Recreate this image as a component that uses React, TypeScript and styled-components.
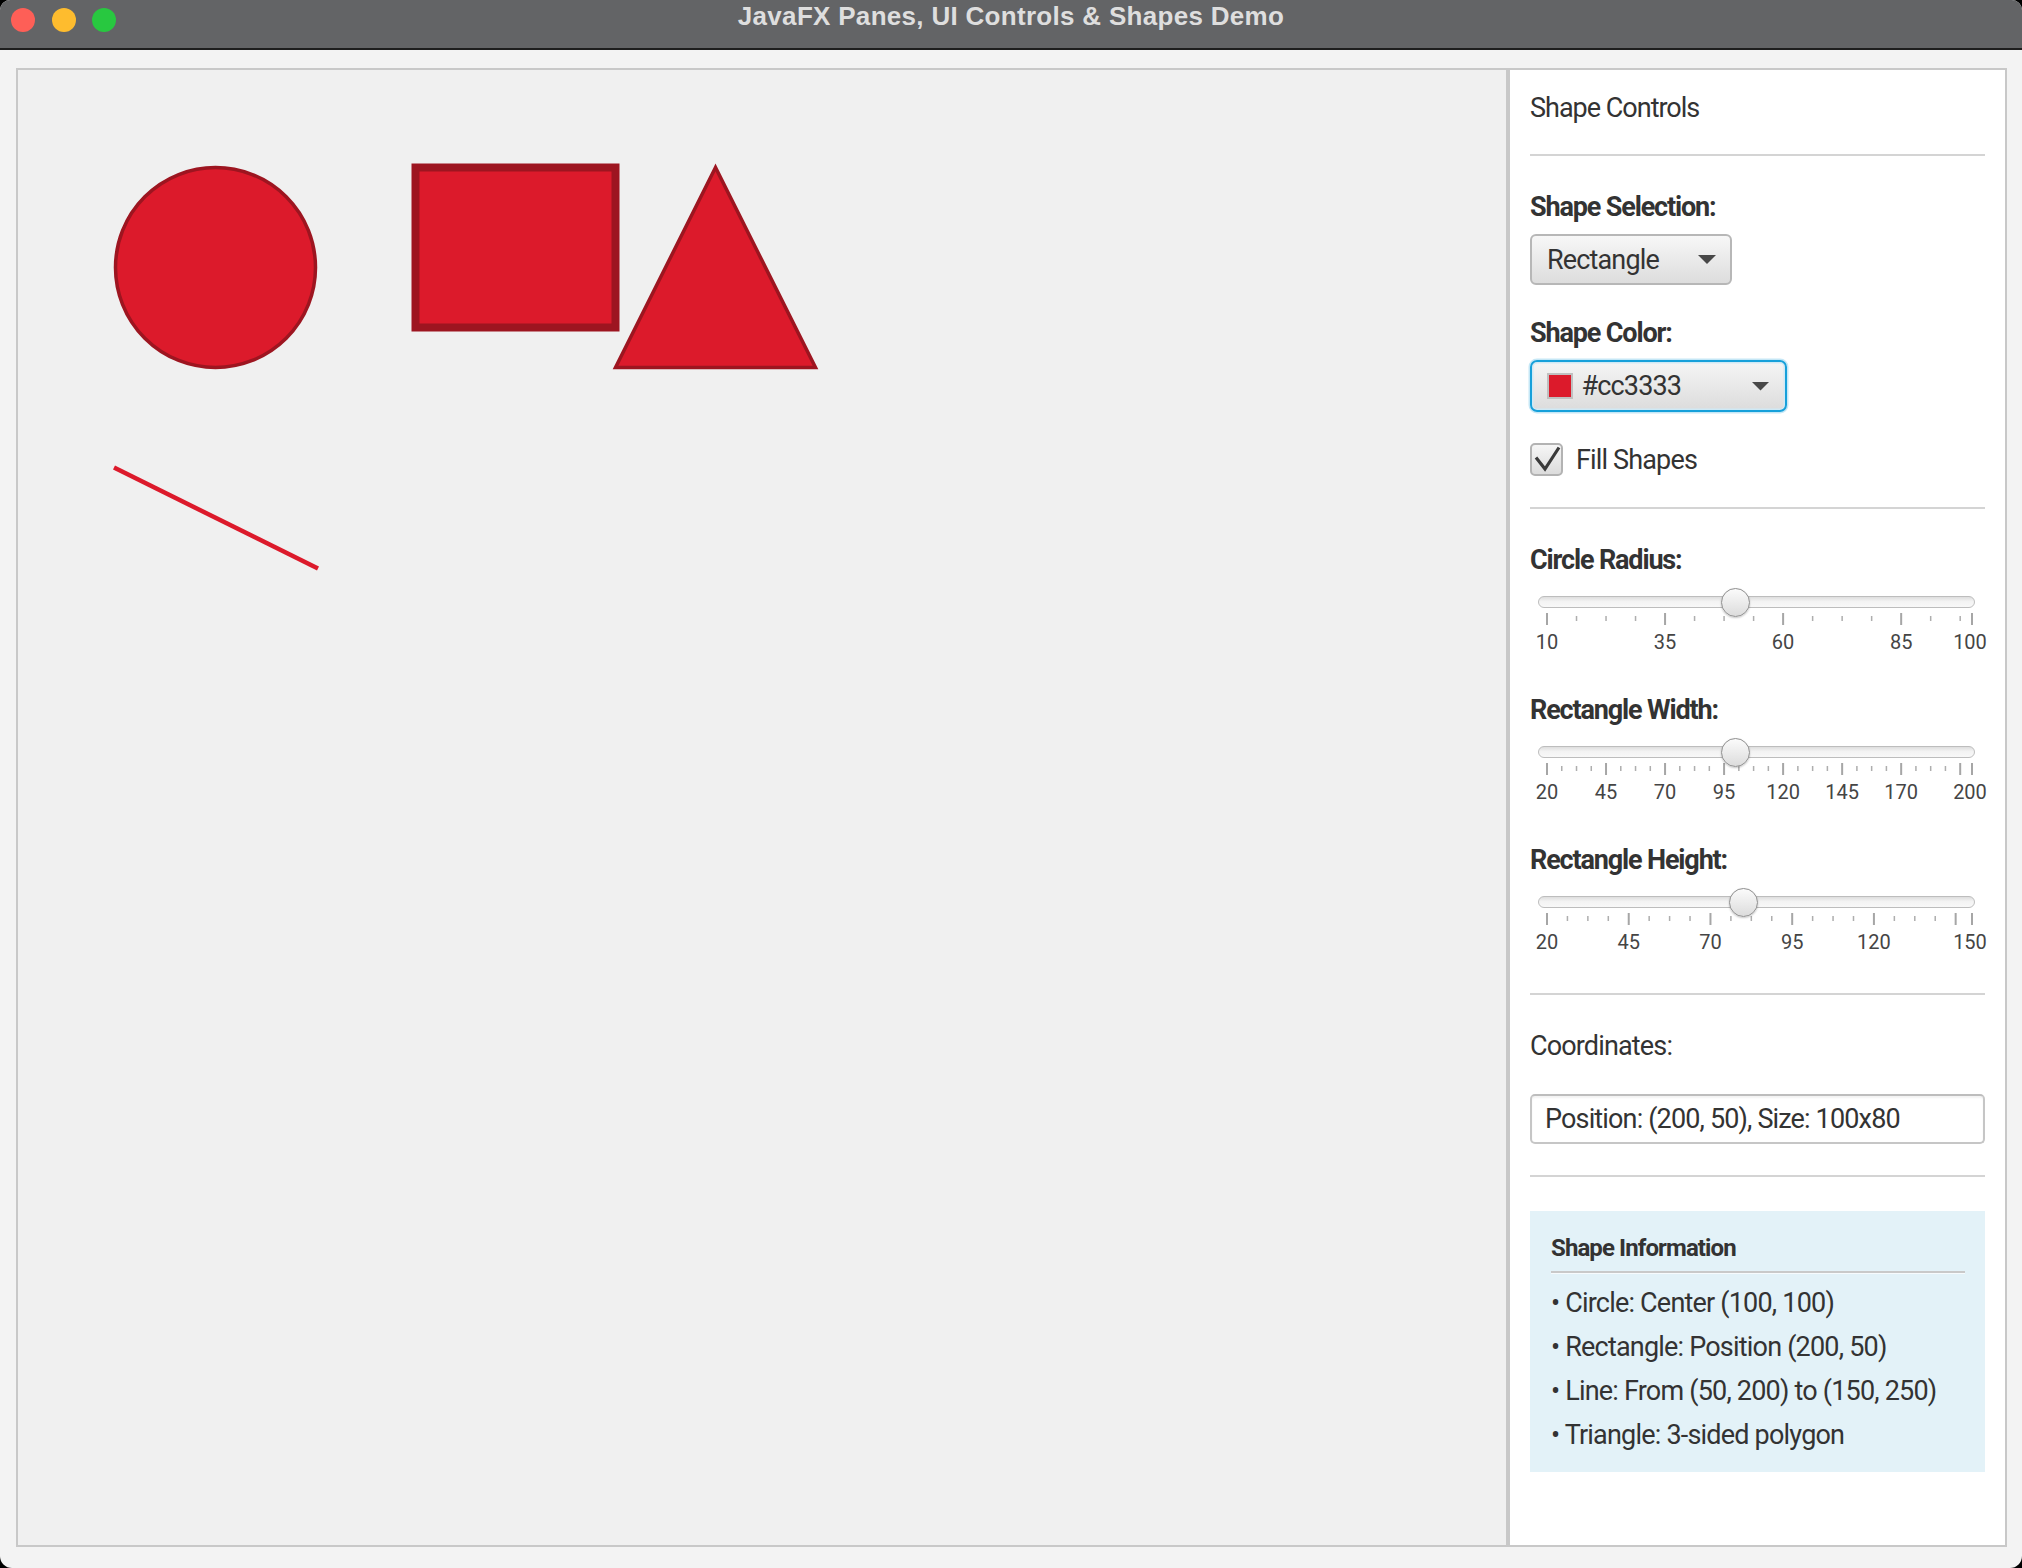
import React from 'react';
import styled, { createGlobalStyle } from 'styled-components';

const GlobalStyle = createGlobalStyle`
  html, body { margin: 0; padding: 0; background: #000; }
  body { width: 2022px; height: 1568px; overflow: hidden; font-family: Roboto, "Liberation Sans", sans-serif; }
  * { box-sizing: border-box; }
`;

const Window = styled.div`
  width: 2022px;
  height: 1568px;
  display: flex;
  flex-direction: column;
  background: #f3f3f3;
  border-radius: 10px 10px 12px 12px;
  overflow: hidden;
`;

const TitleBar = styled.header`
  height: 50px;
  flex: none;
  background: #636466;
  border-bottom: 2px solid #1e1e1e;
  display: grid;
  grid-template-columns: 1fr auto 1fr;
  align-items: start;
`;

const Lights = styled.div`
  display: flex;
  gap: 16.5px;
  padding: 8px 0 0 11px;
`;

const Light = styled.span<{ $c: string }>`
  width: 24px;
  height: 24px;
  border-radius: 50%;
  background: ${(p) => p.$c};
`;

const Title = styled.h1`
  margin: 0;
  padding-top: 1px;
  font: bold 26px/30px "Liberation Sans", Arial, sans-serif;
  letter-spacing: 0.3px;
  color: #dedede;
  white-space: nowrap;
`;

const Body = styled.main`
  flex: 1;
  min-height: 0;
  display: flex;
  padding: 18px 15px 21px 16px;
`;

const Canvas = styled.section`
  flex: 1;
  min-width: 0;
  border: 2px solid #c8c8c8;
  background: #f0f0f0;
`;

const CanvasSvg = styled.svg`
  display: block;
  width: 100%;
  height: 100%;
`;

const Panel = styled.aside`
  width: 499px;
  flex: none;
  background: #fff;
  border: 2px solid #c8c8c8;
  padding: 0 20px;
  display: flex;
  flex-direction: column;
  color: #333;
`;

const textBase = `
  font-family: Roboto, "Liberation Sans", sans-serif;
  font-size: 27px;
  line-height: 32px;
  letter-spacing: -0.85px;
  color: #333;
  white-space: nowrap;
`;

const PanelTitle = styled.h2`
  ${textBase}
  margin: 22px 0 0;
  font-weight: 400;
  letter-spacing: -1px;
`;

const Separator = styled.hr<{ $mt: number }>`
  margin: ${(p) => p.$mt}px 0 0;
  border: none;
  height: 2px;
  flex: none;
  background: #d4d4d4;
`;

const FieldLabel = styled.div<{ $mt: number }>`
  ${textBase}
  margin-top: ${(p) => p.$mt}px;
  font-weight: 700;
  letter-spacing: -1.15px;
`;

const PlainLabel = styled.div<{ $mt: number }>`
  ${textBase}
  margin-top: ${(p) => p.$mt}px;
  font-weight: 400;
`;

const ComboBox = styled.div`
  ${textBase}
  margin-top: 11px;
  width: 202px;
  height: 51px;
  flex: none;
  border: 2px solid #b7b7b7;
  border-radius: 6px;
  background: linear-gradient(to bottom, #f7f7f7, #dddddd);
  display: flex;
  align-items: center;
  justify-content: space-between;
  padding: 0 14px 0 15px;
`;

const Arrow = styled.span`
  width: 18px;
  height: 9px;
  background: #484848;
  clip-path: polygon(0 0, 100% 0, 50% 100%);
  flex: none;
`;

const ColorPicker = styled.div`
  ${textBase}
  margin-top: 11px;
  width: 257px;
  height: 52px;
  flex: none;
  border: 2.5px solid #16a0da;
  border-radius: 7px;
  box-shadow: 0 0 0 1.5px rgba(22, 160, 218, 0.25), inset 0 0 0 1.5px #cfe9f5;
  background: linear-gradient(to bottom, #f5f5f5, #dcdcdc);
  display: flex;
  align-items: center;
  padding: 0 15.5px 0 14.5px;
`;

const Swatch = styled.span<{ $c: string }>`
  width: 26px;
  height: 26px;
  flex: none;
  border: 2px solid #c0c0c0;
  background: ${(p) => p.$c};
`;

const PickerText = styled.span`
  margin-left: 9px;
  flex: 1;
`;

const CheckRow = styled.label`
  ${textBase}
  margin-top: 31px;
  height: 33px;
  display: flex;
  align-items: center;
  gap: 13px;
`;

const CheckBox = styled.span`
  width: 33px;
  height: 33px;
  flex: none;
  border: 2px solid #b3b3b3;
  border-radius: 5px;
  background: linear-gradient(to bottom, #f6f6f6, #dcdcdc);
  display: flex;
`;

const SliderBox = styled.div`
  margin-top: 11px;
  display: flex;
  flex-direction: column;
`;

const TrackRow = styled.div`
  position: relative;
  height: 30px;
  display: flex;
  align-items: center;
  padding: 0 10px 0 8px;
`;

const Track = styled.div`
  flex: 1;
  height: 12px;
  border-radius: 6px;
  border: 1.5px solid #bdbdbd;
  background: linear-gradient(to bottom, #dedede, #f3f3f3 45%, #f8f8f8);
`;

const Thumb = styled.span`
  position: absolute;
  top: 0.5px;
  width: 29px;
  height: 29px;
  border-radius: 50%;
  border: 1.5px solid #8e8e8e;
  background: linear-gradient(to bottom, #fbfbfb, #dcdcdc);
  box-shadow: 0 1px 2px rgba(0, 0, 0, 0.22);
  z-index: 2;
`;

const TickSvg = styled.svg`
  display: block;
  margin-top: -4px;
  flex: none;
`;

const TickLabels = styled.div`
  position: relative;
  margin-top: 5px;
  height: 24px;
`;

const TickLabel = styled.span`
  position: absolute;
  top: 0;
  transform: translateX(-50%);
  font-family: Roboto, "Liberation Sans", sans-serif;
  font-size: 20px;
  line-height: 24px;
  color: #454545;
  white-space: nowrap;
`;

const TextField = styled.div`
  ${textBase}
  margin-top: 32px;
  height: 50px;
  flex: none;
  border: 2px solid #c6c6c6;
  border-top-color: #bdbdbd;
  border-radius: 5px;
  background: #fff;
  box-shadow: inset 0 2px 2px rgba(0, 0, 0, 0.05);
  display: flex;
  align-items: center;
  padding: 0 13px;
`;

const InfoBox = styled.div`
  margin-top: 34px;
  background: #e3f2f8;
  padding: 23px 20px 21px 21px;
  display: flex;
  flex-direction: column;
`;

const InfoTitle = styled.h3`
  margin: 0;
  font-family: Roboto, "Liberation Sans", sans-serif;
  font-size: 24px;
  line-height: 28px;
  font-weight: 700;
  letter-spacing: -0.9px;
  color: #333;
`;

const InfoRule = styled.div`
  margin-top: 9px;
  border-top: 2px solid #c9c9c9;
  border-bottom: 1.5px solid #f7fbfd;
`;

const InfoList = styled.ul`
  margin: 13px 0 0;
  padding: 0;
  list-style: none;
  display: flex;
  flex-direction: column;
  gap: 12px;
`;

const InfoItem = styled.li`
  ${textBase}
  letter-spacing: -0.8px;
`;

const TICK_START = 17;
const TICK_SPAN = 425;
const CONTENT_W = 455;

type SliderProps = { min: number; max: number; value: number; major: number };

function Slider({ min, max, value, major }: SliderProps) {
  const pos = (v: number) => TICK_START + ((v - min) / (max - min)) * TICK_SPAN;
  const majors: number[] = [];
  const minors: number[] = [];
  for (let v = min; v < max; v += major) {
    majors.push(v);
    for (let k = 1; k < 4; k++) {
      const m = v + (k * major) / 4;
      if (m < max) minors.push(m);
    }
  }
  majors.push(max);
  const labels = majors.filter((v) => v === max || pos(max) - pos(v) >= 40);
  return (
    <SliderBox>
      <TrackRow>
        <Track />
        <Thumb style={{ left: pos(value) - 14.5 }} />
      </TrackRow>
      <TickSvg width={CONTENT_W} height={12} viewBox={`0 0 ${CONTENT_W} 12`}>
        {majors.map((v) => (
          <rect key={`M${v}`} x={pos(v) - 1} y={0} width={2} height={12} fill="#a6a6a6" />
        ))}
        {minors.map((v) => (
          <rect key={`m${v}`} x={pos(v) - 0.75} y={3} width={1.5} height={5} fill="#aeaeae" />
        ))}
      </TickSvg>
      <TickLabels>
        {labels.map((v) => (
          <TickLabel key={v} style={{ left: pos(v) - (v === max ? 2 : 0) }}>
            {v}
          </TickLabel>
        ))}
      </TickLabels>
    </SliderBox>
  );
}

const FILL = '#dc1a2b';
const STROKE = '#9d1520';

function ShapeCanvas() {
  return (
    <Canvas>
      <CanvasSvg>
        <circle cx={197.5} cy={197.5} r={100} fill={FILL} stroke={STROKE} strokeWidth={3.5} />
        <rect x={397.5} y={97.5} width={200} height={160} fill={FILL} stroke={STROKE} strokeWidth={8} />
        <polygon
          points="697.5,97.5 597.5,297.5 797.5,297.5"
          fill={FILL}
          stroke={STROKE}
          strokeWidth={3.5}
          strokeLinejoin="miter"
        />
        <line x1={96} y1={397.5} x2={300} y2={498.5} stroke={FILL} strokeWidth={4.5} />
      </CanvasSvg>
    </Canvas>
  );
}

export default function App() {
  return (
    <>
      <GlobalStyle />
      <Window>
        <TitleBar>
          <Lights>
            <Light $c="#fe5f57" />
            <Light $c="#febc2e" />
            <Light $c="#28c840" />
          </Lights>
          <Title>JavaFX Panes, UI Controls &amp; Shapes Demo</Title>
          <div />
        </TitleBar>
        <Body>
          <ShapeCanvas />
          <Panel>
            <PanelTitle>Shape Controls</PanelTitle>
            <Separator $mt={30} />
            <FieldLabel $mt={35}>Shape Selection:</FieldLabel>
            <ComboBox>
              <span>Rectangle</span>
              <Arrow />
            </ComboBox>
            <FieldLabel $mt={32}>Shape Color:</FieldLabel>
            <ColorPicker>
              <Swatch $c={FILL} />
              <PickerText>#cc3333</PickerText>
              <Arrow />
            </ColorPicker>
            <CheckRow>
              <CheckBox>
                <svg width="29" height="29" viewBox="0 0 29 29">
                  <path d="M4 12.5 L13 24 L27 2.5" fill="none" stroke="#3a3a3a" strokeWidth={3.2} />
                </svg>
              </CheckBox>
              <span>Fill Shapes</span>
            </CheckRow>
            <Separator $mt={31} />
            <FieldLabel $mt={35}>Circle Radius:</FieldLabel>
            <Slider min={10} max={100} value={50} major={25} />
            <FieldLabel $mt={40}>Rectangle Width:</FieldLabel>
            <Slider min={20} max={200} value={100} major={25} />
            <FieldLabel $mt={40}>Rectangle Height:</FieldLabel>
            <Slider min={20} max={150} value={80} major={25} />
            <Separator $mt={39} />
            <PlainLabel $mt={35}>Coordinates:</PlainLabel>
            <TextField>Position: (200, 50), Size: 100x80</TextField>
            <Separator $mt={31} />
            <InfoBox>
              <InfoTitle>Shape Information</InfoTitle>
              <InfoRule />
              <InfoList>
                <InfoItem>• Circle: Center (100, 100)</InfoItem>
                <InfoItem>• Rectangle: Position (200, 50)</InfoItem>
                <InfoItem>• Line: From (50, 200) to (150, 250)</InfoItem>
                <InfoItem>• Triangle: 3-sided polygon</InfoItem>
              </InfoList>
            </InfoBox>
          </Panel>
        </Body>
      </Window>
    </>
  );
}
